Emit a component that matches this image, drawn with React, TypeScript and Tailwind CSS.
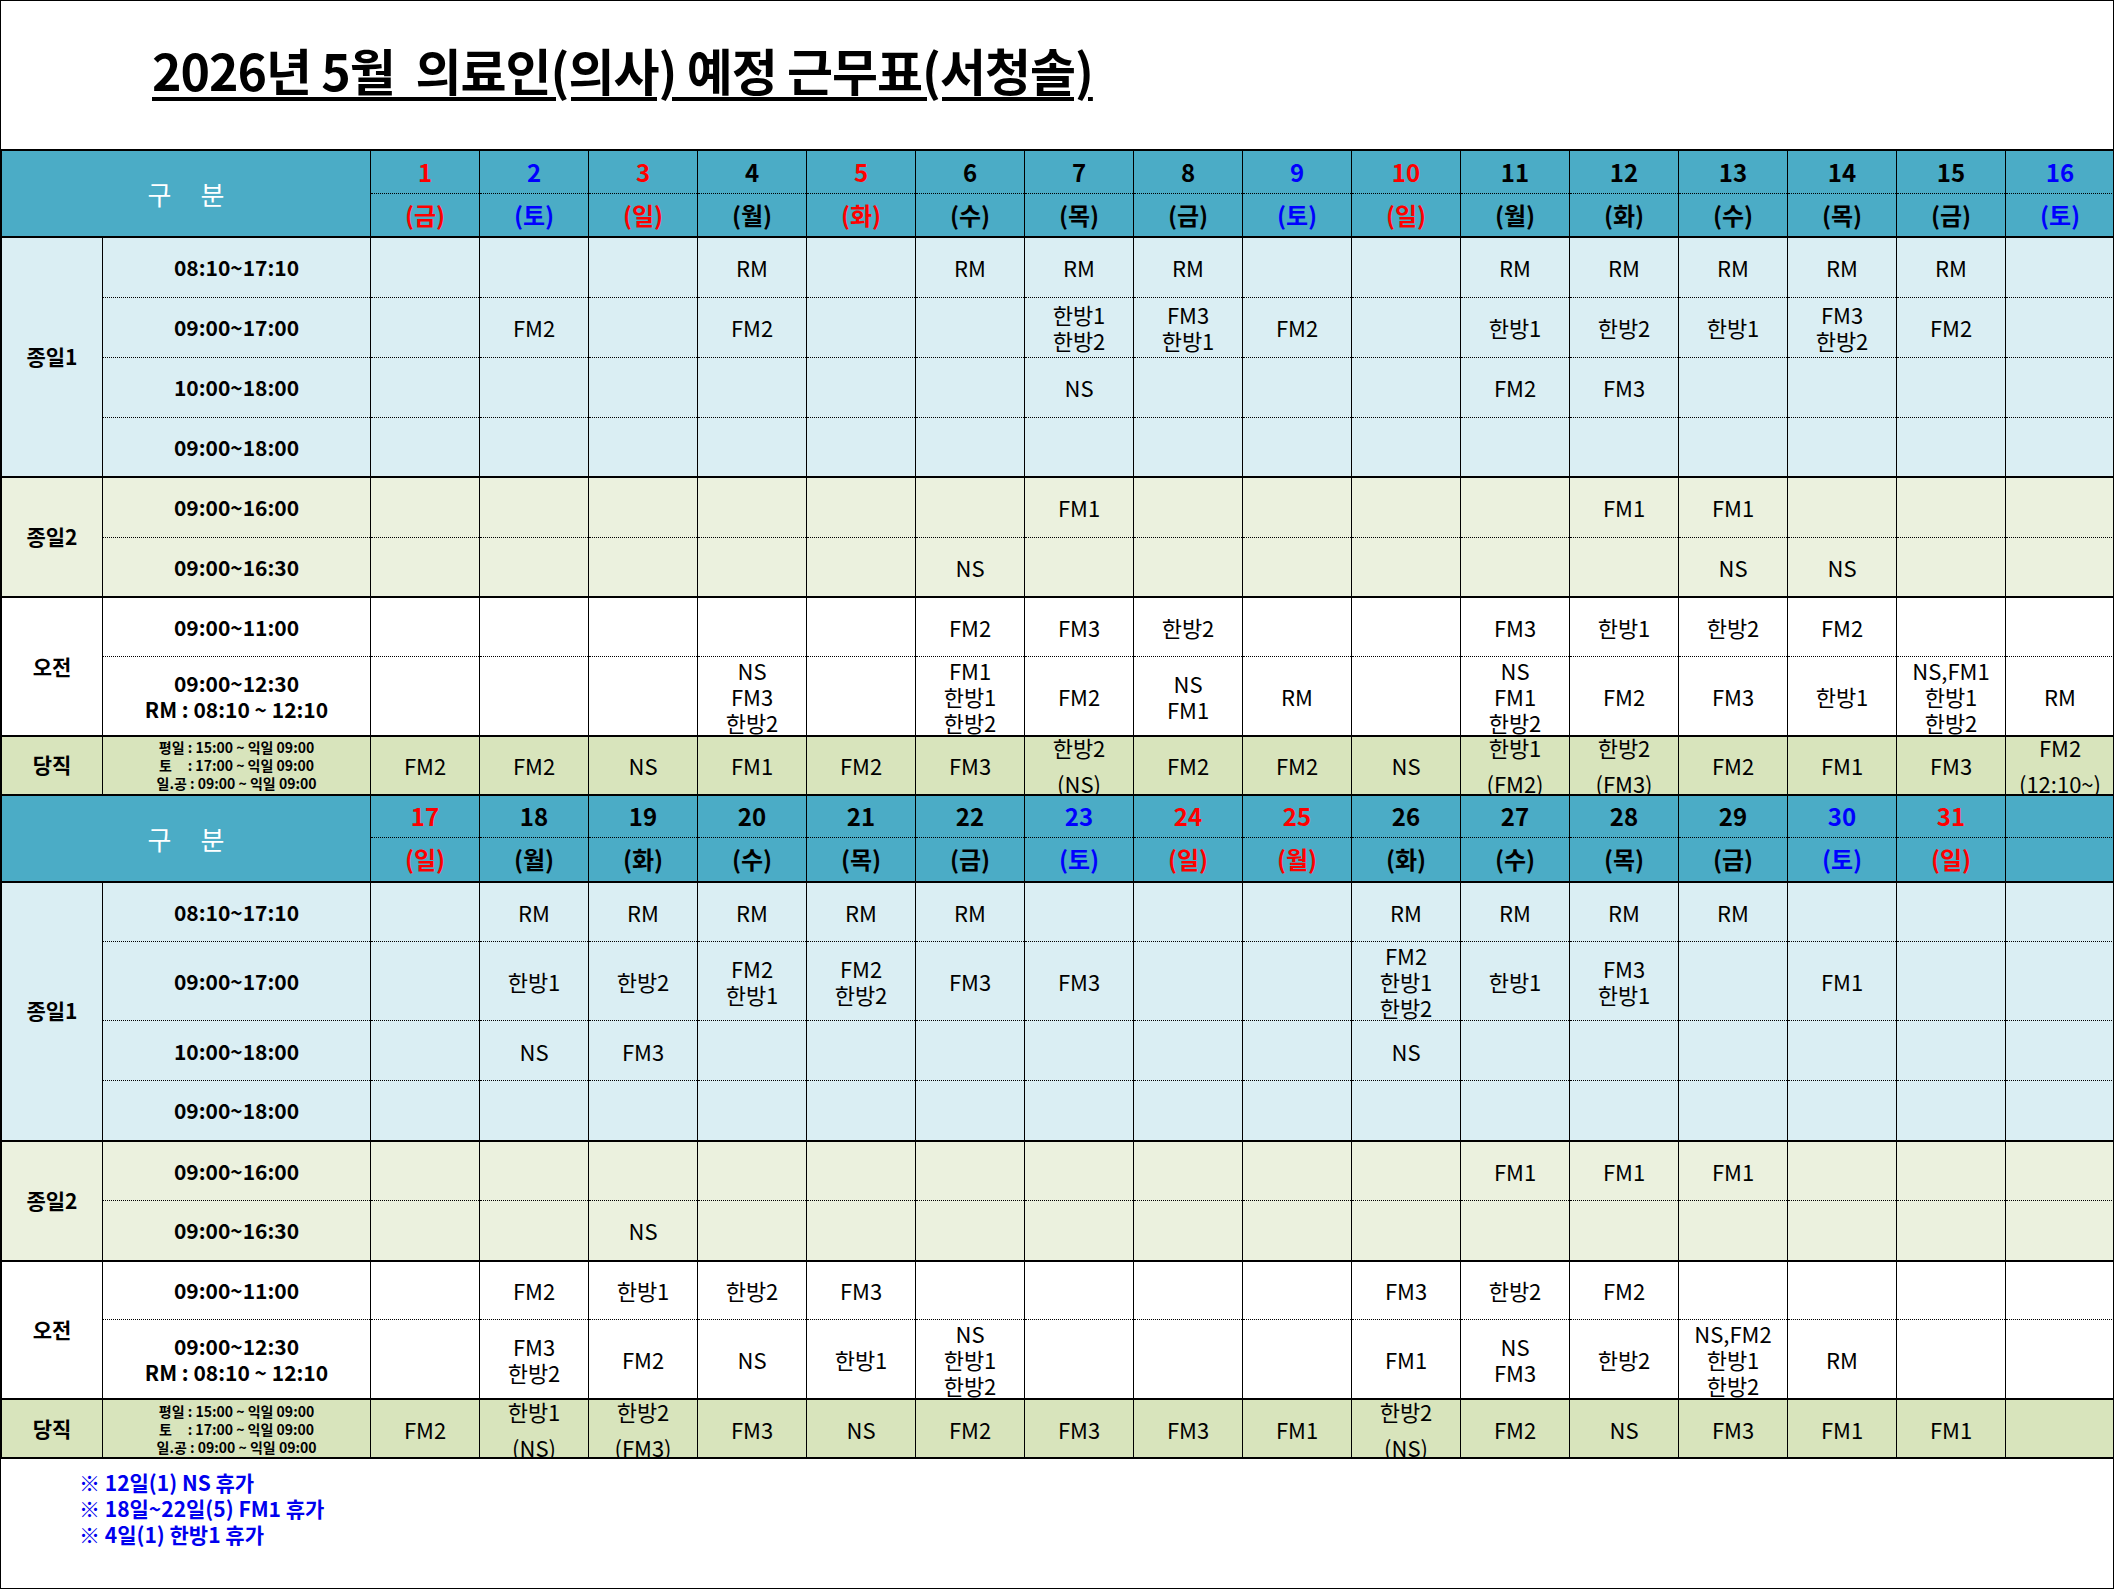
import React from "react"

type Day = { n: string; w: string; c: string }
type Row = { time: React.ReactNode; h: string; cells: string[] }
type Group = { name: string; bg: string; rows: Row[]; duty?: boolean }

const red = "text-[#ff0000]"
const blue = "text-[#0000ff]"
const black = "text-black"

const daysA: Day[] = [
  { n: "1", w: "금", c: red },
  { n: "2", w: "토", c: blue },
  { n: "3", w: "일", c: red },
  { n: "4", w: "월", c: black },
  { n: "5", w: "화", c: red },
  { n: "6", w: "수", c: black },
  { n: "7", w: "목", c: black },
  { n: "8", w: "금", c: black },
  { n: "9", w: "토", c: blue },
  { n: "10", w: "일", c: red },
  { n: "11", w: "월", c: black },
  { n: "12", w: "화", c: black },
  { n: "13", w: "수", c: black },
  { n: "14", w: "목", c: black },
  { n: "15", w: "금", c: black },
  { n: "16", w: "토", c: blue },
]

const daysB: Day[] = [
  { n: "17", w: "일", c: red },
  { n: "18", w: "월", c: black },
  { n: "19", w: "화", c: black },
  { n: "20", w: "수", c: black },
  { n: "21", w: "목", c: black },
  { n: "22", w: "금", c: black },
  { n: "23", w: "토", c: blue },
  { n: "24", w: "일", c: red },
  { n: "25", w: "월", c: red },
  { n: "26", w: "화", c: black },
  { n: "27", w: "수", c: black },
  { n: "28", w: "목", c: black },
  { n: "29", w: "금", c: black },
  { n: "30", w: "토", c: blue },
  { n: "31", w: "일", c: red },
  { n: "", w: "", c: black },
]

// 16 cells starting at a given day
function fill(start: number, data: Record<number, string>) {
  return Array.from({ length: 16 }, (_, i) => data[start + i] ?? "")
}

const amLabel = (
  <>
    <div>09:00~12:30</div>
    <div>RM : 08:10 ~ 12:10</div>
  </>
)

const dutyLabel = (
  <div className="text-[14px] leading-[18px] whitespace-pre">
    <div>평일 : 15:00 ~ 익일 09:00</div>
    <div>토     : 17:00 ~ 익일 09:00</div>
    <div>일.공 : 09:00 ~ 익일 09:00</div>
  </div>
)

function groupsFor(s: number, second: boolean): Group[] {
  const d = second
    ? {
        a1: { 18: "RM", 19: "RM", 20: "RM", 21: "RM", 22: "RM", 26: "RM", 27: "RM", 28: "RM", 29: "RM" },
        a2: { 18: "한방1", 19: "한방2", 20: "FM2\n한방1", 21: "FM2\n한방2", 22: "FM3", 23: "FM3", 26: "FM2\n한방1\n한방2", 27: "한방1", 28: "FM3\n한방1", 30: "FM1" },
        a3: { 18: "NS", 19: "FM3", 26: "NS" },
        b1: { 27: "FM1", 28: "FM1", 29: "FM1" },
        b2: { 19: "NS" },
        c1: { 18: "FM2", 19: "한방1", 20: "한방2", 21: "FM3", 26: "FM3", 27: "한방2", 28: "FM2" },
        c2: { 18: "FM3\n한방2", 19: "FM2", 20: "NS", 21: "한방1", 22: "NS\n한방1\n한방2", 26: "FM1", 27: "NS\nFM3", 28: "한방2", 29: "NS,FM2\n한방1\n한방2", 30: "RM" },
        d: { 17: "FM2", 18: "한방1\n(NS)", 19: "한방2\n(FM3)", 20: "FM3", 21: "NS", 22: "FM2", 23: "FM3", 24: "FM3", 25: "FM1", 26: "한방2\n(NS)", 27: "FM2", 28: "NS", 29: "FM3", 30: "FM1", 31: "FM1" },
      }
    : {
        a1: { 4: "RM", 6: "RM", 7: "RM", 8: "RM", 11: "RM", 12: "RM", 13: "RM", 14: "RM", 15: "RM" },
        a2: { 2: "FM2", 4: "FM2", 7: "한방1\n한방2", 8: "FM3\n한방1", 9: "FM2", 11: "한방1", 12: "한방2", 13: "한방1", 14: "FM3\n한방2", 15: "FM2" },
        a3: { 7: "NS", 11: "FM2", 12: "FM3" },
        b1: { 7: "FM1", 12: "FM1", 13: "FM1" },
        b2: { 6: "NS", 13: "NS", 14: "NS" },
        c1: { 6: "FM2", 7: "FM3", 8: "한방2", 11: "FM3", 12: "한방1", 13: "한방2", 14: "FM2" },
        c2: { 4: "NS\nFM3\n한방2", 6: "FM1\n한방1\n한방2", 7: "FM2", 8: "NS\nFM1", 9: "RM", 11: "NS\nFM1\n한방2", 12: "FM2", 13: "FM3", 14: "한방1", 15: "NS,FM1\n한방1\n한방2", 16: "RM" },
        d: { 1: "FM2", 2: "FM2", 3: "NS", 4: "FM1", 5: "FM2", 6: "FM3", 7: "한방2\n(NS)", 8: "FM2", 9: "FM2", 10: "NS", 11: "한방1\n(FM2)", 12: "한방2\n(FM3)", 13: "FM2", 14: "FM1", 15: "FM3", 16: "FM2\n(12:10~)" },
      }
  return [
    {
      name: "종일1",
      bg: "bg-[#daeef3]",
      rows: [
        { time: "08:10~17:10", h: "h-[60px]", cells: fill(s, d.a1) },
        { time: "09:00~17:00", h: second ? "h-[78px]" : "h-[60px]", cells: fill(s, d.a2) },
        { time: "10:00~18:00", h: "h-[60px]", cells: fill(s, d.a3) },
        { time: "09:00~18:00", h: "h-[60px]", cells: fill(s, {}) },
      ],
    },
    {
      name: "종일2",
      bg: "bg-[#ebf1de]",
      rows: [
        { time: "09:00~16:00", h: "h-[60px]", cells: fill(s, d.b1) },
        { time: "09:00~16:30", h: "h-[60px]", cells: fill(s, d.b2) },
      ],
    },
    {
      name: "오전",
      bg: "bg-white",
      rows: [
        { time: "09:00~11:00", h: "h-[59px]", cells: fill(s, d.c1) },
        { time: amLabel, h: "h-[78px]", cells: fill(s, d.c2) },
      ],
    },
    {
      name: "당직",
      bg: "bg-[#d8e4bc]",
      duty: true,
      rows: [{ time: dutyLabel, h: "h-[59px]", cells: fill(s, d.d) }],
    },
  ]
}

function Entry({ text, duty }: { text: string; duty?: boolean }) {
  const lines = text ? text.split("\n") : []
  if (duty) {
    return (
      <div className="h-[57px] overflow-hidden flex flex-col items-center justify-center leading-[36px]">
        {lines.map((l) => (
          <div key={l} className="shrink-0">{l}</div>
        ))}
      </div>
    )
  }
  return (
    <div className="flex flex-col items-center justify-center leading-[26px]">
      {lines.map((l) => (
        <div key={l}>{l}</div>
      ))}
    </div>
  )
}

function Half({ days, start, second }: { days: Day[]; start: number; second: boolean }) {
  const groups = groupsFor(start, second)
  return (
    <>
      <tr className="h-[43px] bg-[#4bacc6]">
        <td
          colSpan={2}
          rowSpan={2}
          className="p-0 border-x border-t-2 border-b-2 border-black text-center text-white text-[26px] whitespace-pre"
        >
          구     분
        </td>
        {days.map((d, i) => (
          <td
            key={i}
            className={`p-0 border-x border-t-2 border-b border-black [border-bottom-style:dotted] text-center text-[24px] font-bold ${d.c}`}
          >
            {d.n}
          </td>
        ))}
      </tr>
      <tr className="h-[44px] bg-[#4bacc6]">
        {days.map((d, i) => (
          <td
            key={i}
            className={`p-0 border-x border-t border-b-2 border-black [border-top-style:dotted] text-center text-[24px] font-bold ${d.c}`}
          >
            {d.w ? `(${d.w})` : ""}
          </td>
        ))}
      </tr>
      {groups.map((g) =>
        g.rows.map((r, i) => {
          const last = i === g.rows.length - 1
          const edge = `${i === 0 ? "border-t-2" : "border-t [border-top-style:dotted]"} ${
            last ? "border-b-2" : "border-b [border-bottom-style:dotted]"
          }`
          return (
            <tr key={g.name + i} className={`${r.h} ${g.bg}`}>
              {i === 0 && (
                <td
                  rowSpan={g.rows.length}
                  className="p-0 border-x border-t-2 border-b-2 border-black text-center text-[21px] font-bold"
                >
                  {g.name}
                </td>
              )}
              <td className={`p-0 border-x border-black ${edge} text-center text-[21px] font-bold leading-[26px]`}>
                {r.time}
              </td>
              {r.cells.map((c, j) => (
                <td key={j} className={`p-0 border-x border-black ${edge} text-center text-[22px]`}>
                  <Entry text={c} duty={g.duty} />
                </td>
              ))}
            </tr>
          )
        })
      )}
    </>
  )
}

export default function App() {
  return (
    <div className="w-[2114px] h-[1589px] bg-white border border-black text-black font-['Noto_Sans_CJK_KR',sans-serif] overflow-hidden">
      <div className="h-[148px] flex items-center pl-[151px] pb-[12px]">
        <h1 className="text-[50px] font-bold tracking-[-1px] whitespace-pre underline decoration-[4px] underline-offset-[6px]">
          2026년 5월  의료인(의사) 예정 근무표(서청솔)
        </h1>
      </div>
      <table className="table-fixed border-collapse w-full">
        <colgroup>
          <col className="w-[101px]" />
          <col className="w-[268px]" />
          {Array.from({ length: 16 }, (_, i) => (
            <col key={i} className="w-[109px]" />
          ))}
        </colgroup>
        <tbody>
          <Half days={daysA} start={1} second={false} />
          <Half days={daysB} start={17} second={true} />
        </tbody>
      </table>
      <div className="pl-[78px] pt-[10px] text-[21px] font-bold leading-[26px] text-[#0000ee]">
        <div>※ 12일(1) NS 휴가</div>
        <div>※ 18일~22일(5) FM1 휴가</div>
        <div>※ 4일(1) 한방1 휴가</div>
      </div>
    </div>
  )
}
